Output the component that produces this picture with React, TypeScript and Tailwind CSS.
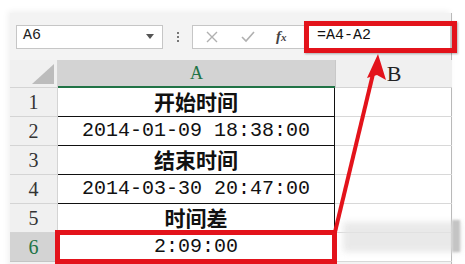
import React from "react"

const rows = [
  { n: "1", text: "开始时间", head: true },
  { n: "2", text: "2014-01-09 18:38:00", head: false },
  { n: "3", text: "结束时间", head: true },
  { n: "4", text: "2014-03-30 20:47:00", head: false },
  { n: "5", text: "时间差", head: true },
  { n: "6", text: "2:09:00", head: false },
]

const serif = "font-['Liberation_Serif','Noto_Sans_CJK_SC',serif]"

const App = () => {
  return (
    <div className="relative w-[465px] h-[264px] overflow-hidden bg-white">
      {/* sheet window */}
      <div className="ml-[10px] mt-[13px] w-[442px] h-[260px] bg-[#f3f3f3] border-r border-[#b9b9b9] shadow-[-2px_-2px_6px_rgba(0,0,0,0.06)]">
        {/* formula bar */}
        <div className="flex items-center h-[47px] pl-[6px]">
          <div className="flex items-center justify-between w-[147px] h-[24px] bg-white border border-[#c6c6c6] pl-[6px] pr-[8px]">
            <span className="font-['Liberation_Mono',monospace] text-[15px] text-[#222]">A6</span>
            <span className="w-0 h-0 border-l-[4px] border-r-[4px] border-t-[5px] border-l-transparent border-r-transparent border-t-[#555]" />
          </div>
          <div className="flex flex-col gap-[2px] ml-[14px] mr-[13px]">
            <span className="w-[2px] h-[2px] bg-[#777]" />
            <span className="w-[2px] h-[2px] bg-[#777]" />
            <span className="w-[2px] h-[2px] bg-[#777]" />
          </div>
          <div className="flex items-center h-[24px] w-[112px] bg-white border border-[#c6c6c6] border-r-0">
            <svg width="14" height="14" viewBox="0 0 14 14" className="ml-[12px]">
              <path d="M2 2 L12 12 M12 2 L2 12" stroke="#b0b0b0" strokeWidth="1.4" />
            </svg>
            <svg width="16" height="14" viewBox="0 0 16 14" className="ml-[21px]">
              <path d="M2 7 L6 11 L14 2" stroke="#b0b0b0" strokeWidth="1.6" fill="none" />
            </svg>
            <span className="ml-[20px] font-['Liberation_Serif',serif] italic text-[15px] text-[#444] font-bold">
              f<span className="text-[11px]">x</span>
            </span>
          </div>
          <div className="flex items-center h-[24px] flex-1 bg-white border border-[#c6c6c6] pl-[12px]">
            <span className="font-['Liberation_Mono',monospace] text-[15px] text-[#111]">=A4-A2</span>
          </div>
        </div>

        {/* grid */}
        <div className="grid grid-cols-[48px_277px_117px] bg-white">
          <div className="relative h-[28px] bg-[#f0f0f0] border-r border-b border-[#d4d4d4]">
            <svg width="22" height="20" viewBox="0 0 22 20" className="absolute right-[3px] bottom-[3px]">
              <path d="M22 0 L22 20 L0 20 Z" fill="#bcbcbc" />
            </svg>
          </div>
          <div className={`h-[28px] bg-[#d3d3d3] border-b-2 border-[#217346] flex items-center justify-center ${serif} text-[18px] text-[#217346]`}>
            A
          </div>
          <div className={`h-[28px] bg-[#f0f0f0] border-b border-[#d4d4d4] border-l border-l-[#c8c8c8] flex items-center justify-center ${serif} text-[22px] text-[#222]`}>
            B
          </div>

          {rows.map(r => (
            <React.Fragment key={r.n}>
              <div
                className={`h-[29px] flex items-center justify-center border-r border-b ${serif} text-[20px] ${
                  r.n === "6" ? "bg-[#d3d3d3] text-[#217346] border-[#c4c4c4]" : "bg-[#f0f0f0] text-[#333] border-[#d4d4d4]"
                }`}
              >
                {r.n}
              </div>
              <div
                className={`h-[29px] flex items-center justify-center border-b border-r border-[#111] text-[#111] ${
                  r.head
                    ? "font-['Noto_Sans_CJK_SC',sans-serif] font-bold text-[21px]"
                    : "font-['Liberation_Mono','Noto_Sans_CJK_SC',monospace] text-[20px]"
                }`}
              >
                {r.text}
              </div>
              <div className="h-[29px] border-b border-[#d8d8d8]" />
            </React.Fragment>
          ))}
        </div>
      </div>

      {/* blurred watermark */}
      <div className="absolute left-[343px] top-[222px] w-[118px] h-[30px] bg-[#e4e4e4] blur-[3px] opacity-80" />
      <div className="absolute left-[452px] top-[220px] w-[8px] h-[32px] bg-[#c4c4c4] blur-[1px]" />

      {/* annotation boxes */}
      <div className="absolute left-[304px] top-[21px] w-[153px] h-[32px] border-[5px] border-[#e3131b] shadow-[1px_1px_2px_rgba(0,0,0,0.3)]" />
      <div className="absolute left-[55px] top-[230px] w-[282px] h-[34px] border-[5px] border-[#e3131b]" />

      {/* arrow */}
      <svg width="465" height="264" viewBox="0 0 465 264" className="absolute left-0 top-0 pointer-events-none">
        <line x1="335" y1="232" x2="373" y2="74" stroke="#e3131b" strokeWidth="4" />
        <path d="M378 54 L386 80 L377 75 L367 78 Z" fill="#e3131b" />
      </svg>
    </div>
  )
}

export default App
